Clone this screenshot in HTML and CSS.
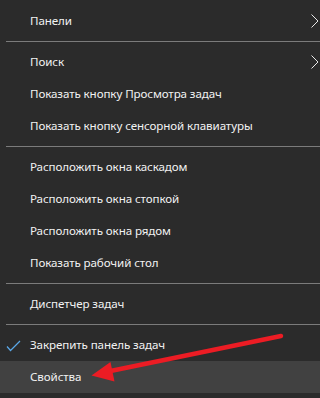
FILE: index.html
```html
<!DOCTYPE html>
<html lang="ru">
<head>
<meta charset="utf-8">
<link rel="stylesheet" href="styles.css">
</head>
<body>
<div class="menu">
  <div class="item"><span class="gutter"></span><span class="label">Панели</span>
    <svg class="chev" width="8" height="16" viewBox="0 0 8 16"><polyline points="0.5,1.5 7,8 0.5,14.5" fill="none" stroke="#e8e8e8" stroke-width="1"/></svg></div>
  <div class="sep"></div>
  <div class="item"><span class="gutter"></span><span class="label">Поиск</span>
    <svg class="chev" width="8" height="16" viewBox="0 0 8 16"><polyline points="0.5,1.5 7,8 0.5,14.5" fill="none" stroke="#e8e8e8" stroke-width="1"/></svg></div>
  <div class="item"><span class="gutter"></span><span class="label">Показать кнопку Просмотра задач</span></div>
  <div class="item"><span class="gutter"></span><span class="label">Показать кнопку сенсорной клавиатуры</span></div>
  <div class="sep"></div>
  <div class="item"><span class="gutter"></span><span class="label">Расположить окна каскадом</span></div>
  <div class="item"><span class="gutter"></span><span class="label">Расположить окна стопкой</span></div>
  <div class="item"><span class="gutter"></span><span class="label">Расположить окна рядом</span></div>
  <div class="item"><span class="gutter"></span><span class="label">Показать рабочий стол</span></div>
  <div class="sep"></div>
  <div class="item"><span class="gutter"></span><span class="label">Диспетчер задач</span></div>
  <div class="sep"></div>
  <div class="item"><span class="gutter"><svg class="check" width="16" height="12" viewBox="0 0 16 12"><polyline points="1,6.5 4.5,10.5 14,1" fill="none" stroke="#5aa8e8" stroke-width="1.2"/></svg></span><span class="label">Закрепить панель задач</span></div>
  <div class="item hover"><span class="gutter"></span><span class="label">Свойства</span></div>
</div>
<svg class="annot" width="320" height="398" viewBox="0 0 320 398">
  <line x1="281" y1="336" x2="108" y2="371.5" stroke="#ec1c24" stroke-width="4.5" stroke-linecap="round"/>
  <polygon points="91.5,375.5 110.5,362 114.5,381.5" fill="#ec1c24"/>
</svg>
</body>
</html>
```
FILE: styles.css
```css
html, body {
  margin: 0;
  padding: 0;
  background: #2b2b2b;
}
body {
  width: 320px;
  height: 398px;
  overflow: hidden;
  position: relative;
  font-family: "Noto Sans", "Open Sans", sans-serif;
  font-size: 11.6px;
  letter-spacing: -0.1px;
  color: #f2f2f2;
}
.menu {
  padding-top: 5px;
  display: flex;
  flex-direction: column;
}
.item {
  height: 32px;
  line-height: 32px;
  display: flex;
  align-items: center;
  padding-right: 1px;
  white-space: nowrap;
}
.item.hover {
  background: #414141;
}
.gutter {
  width: 30px;
  flex: none;
  display: flex;
  align-items: center;
  justify-content: flex-start;
  padding-left: 6px;
  box-sizing: border-box;
  height: 32px;
}
.check {
  display: block;
  margin-top: 1px;
}
.label {
  flex: 1;
}
.chev {
  display: block;
  flex: none;
}
.sep {
  height: 1px;
  background: #7b7b7b;
  margin: 4px 0 4px 6px;
}
.annot {
  position: absolute;
  left: 0;
  top: 0;
  pointer-events: none;
}
```
